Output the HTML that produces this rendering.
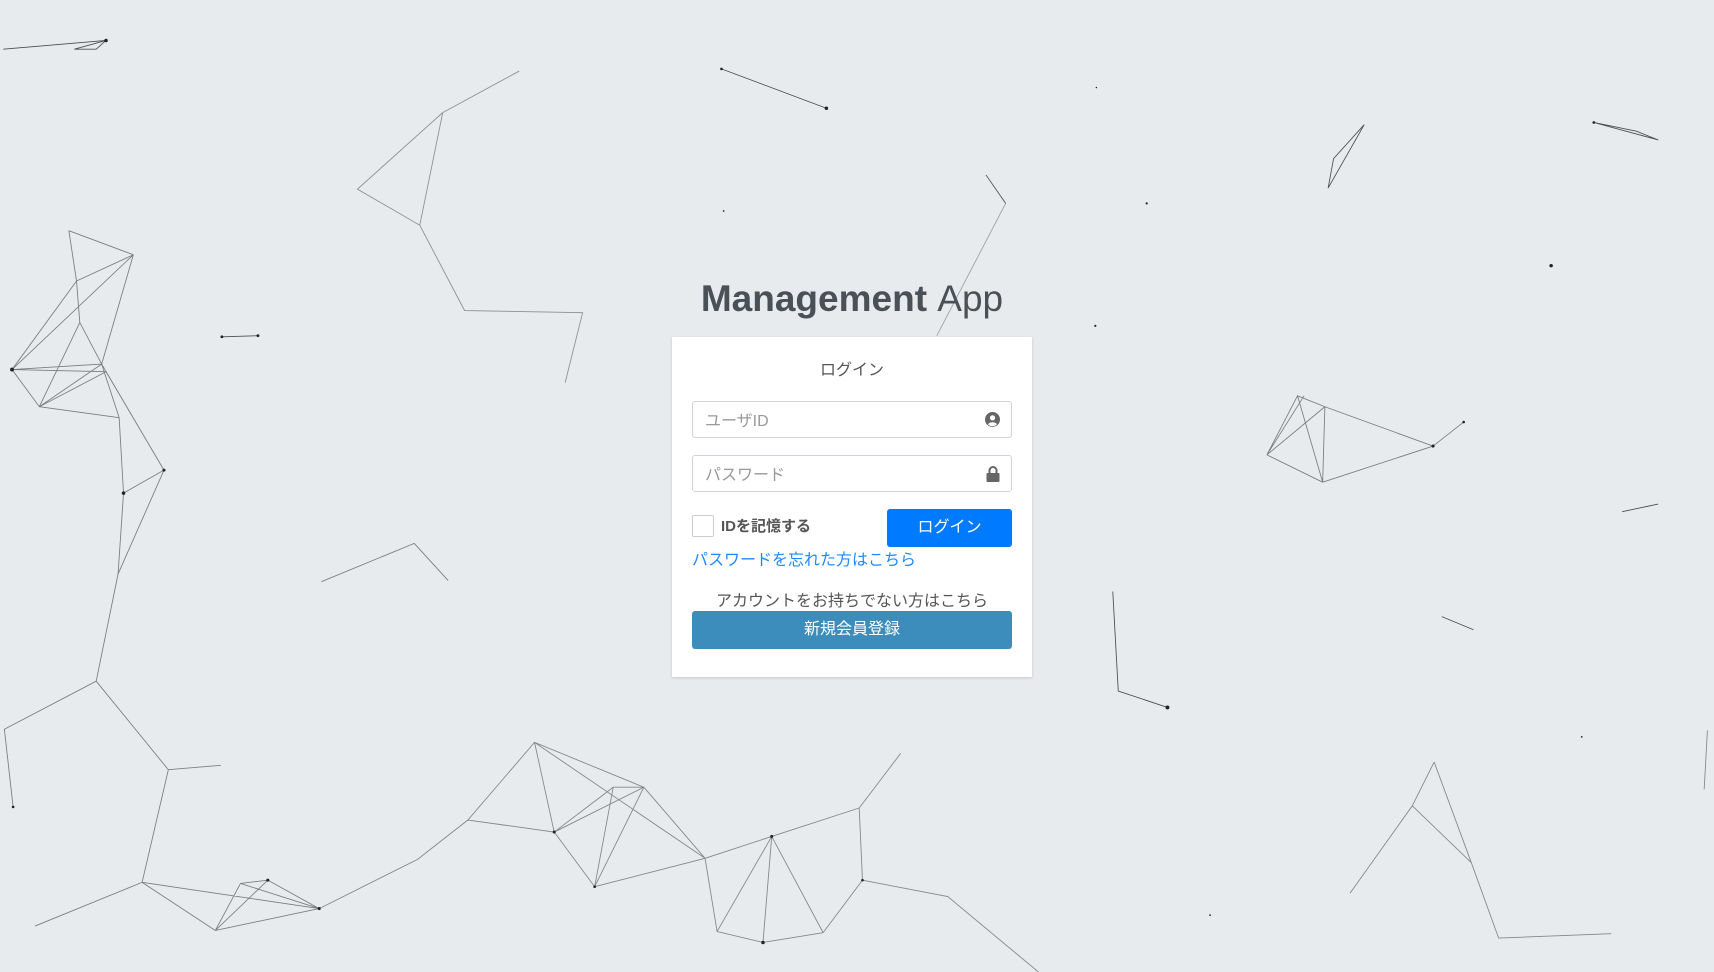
<!DOCTYPE html>
<html><head><meta charset="utf-8">
<style>
html,body{margin:0;padding:0;}
body{width:1714px;height:972px;background:#e8ebee;position:relative;overflow:hidden;font-family:"Liberation Sans","Noto Sans CJK JP",sans-serif;}
svg.bg{position:absolute;left:0;top:0;width:1714px;height:972px;}
.title{position:absolute;left:672px;width:360px;top:274px;text-align:center;font-size:37px;color:#4a5057;line-height:50px;white-space:nowrap;}
.title b{font-weight:700;}
.title span{font-weight:300;}
.card{position:absolute;left:672px;top:337px;width:360px;height:340px;background:#fff;box-shadow:0 1px 3px rgba(0,0,0,.15);}
.h{position:absolute;top:19px;width:100%;text-align:center;font-size:16px;color:#555;}
.inp{position:absolute;left:20px;width:318px;height:35px;border:1px solid #ced4da;border-radius:3px;}
.inp .ph{position:absolute;left:12px;top:5px;font-size:16px;color:#999;}
.inp svg{position:absolute;right:11px;top:10px;}
.cb{position:absolute;left:20px;top:178px;width:20px;height:20px;border:1px solid #ccc;border-radius:2px;}
.cbl{position:absolute;left:49px;top:178px;font-size:15px;font-weight:bold;color:#555;}
.btn{position:absolute;left:215px;top:172px;width:125px;height:38px;background:#007bff;border-radius:3px;color:#fff;font-size:16px;text-align:center;line-height:38px;}
.fg{position:absolute;left:20px;top:209px;font-size:16px;color:#1a8cff;}
.na{position:absolute;top:250px;width:100%;text-align:center;font-size:16px;color:#555;}
.reg{position:absolute;left:20px;top:274px;width:320px;height:38px;background:#3c8dbc;border-radius:3px;color:#fff;font-size:16px;text-align:center;line-height:38px;}
</style></head><body>
<svg class="bg" viewBox="0 0 1568 889" preserveAspectRatio="none">
<g stroke="#333" stroke-width="0.8" fill="none" stroke-opacity="0.85">
<path d="M3 45L97 37M68 45L97 37L88 45Z"/>
<path d="M405 103L475 65M405 103L327 173L384 206L405 103M384 206L425 284L533 286L517 350" stroke-opacity="0.5"/>
<path d="M660 63L756 99"/>
<path d="M902 160L920 186"/><path d="M920 186L857 307" stroke-opacity="0.4"/>
<path d="M1248 114L1220 145L1215 172L1248 114"/>
<path d="M1458 112L1497 120L1517 128L1458 112"/>
<path d="M63 211L122 233M63 211L70 257L122 233M70 257L73 295L93 333M122 233L11 338M70 257L11 338M11 338L36 372L97 340M11 338L97 340M11 338L93 333M36 372L109 382M36 372L93 333M73 295L36 372M122 233L93 333M93 333L109 382M97 340L150 430M93 333L150 430M150 430L113 451L109 382M150 430L108 525M113 451L108 525L88 623L4 667L12 738M88 623L154 704L202 700M154 704L130 807L32 847M130 807L197 851M130 807L292 831M197 851L245 805L292 831L197 851M220 808L197 851M220 808L292 831M245 805L220 808" stroke-opacity="0.6"/>
<path d="M203 308L236 307"/>
<path d="M294 532L379 497L410 531" stroke-opacity="0.6"/>
<path d="M292 831L382 786L428 750L489 679M428 750L507 761L489 679L589 720M489 679L645 785M507 761L561 720L589 720L507 761M507 761L544 811L561 720M544 811L589 720L645 785M544 811L645 785L706 765M645 785L656 852L698 862L753 853M706 765L656 852M706 765L698 862M706 765L753 853M706 765L786 739M753 853L789 805L786 739L824 689M789 805L867 820L950 889" stroke-opacity="0.55"/>
<path d="M1212 372L1311 408L1210 441M1311 408L1339 386M1159 416L1210 441M1159 416L1187 362L1210 441M1212 372L1210 441M1159 416L1212 372M1187 362L1212 372M1193 362L1159 416" stroke-opacity="0.6"/>
<path d="M1484 468L1517 461M1018 541L1023 632L1068 647M1319 564L1348 576"/>
<path d="M1312 697L1292 737L1346 789L1312 697M1292 737L1235 817M1346 789L1371 858L1474 854M1562 668L1559 722" stroke-opacity="0.55"/>
</g>
<g fill="#222">
<circle cx="97" cy="37" r="1.6"/><circle cx="756" cy="99" r="1.6"/><circle cx="660" cy="63" r="1.2"/>
<circle cx="1003" cy="80" r="0.7"/><circle cx="1049" cy="186" r="1"/><circle cx="662" cy="193" r="0.8"/>
<circle cx="1419" cy="243" r="1.6"/><circle cx="1002" cy="298" r="1"/><circle cx="1447" cy="674" r="0.8"/>
<circle cx="1107" cy="837" r="0.8"/><circle cx="11" cy="338" r="1.8"/><circle cx="113" cy="451" r="1.6"/>
<circle cx="150" cy="430" r="1.4"/><circle cx="203" cy="308" r="1.3"/><circle cx="236" cy="307" r="1.3"/>
<circle cx="292" cy="831" r="1.4"/><circle cx="245" cy="805" r="1.4"/><circle cx="507" cy="761" r="1.4"/>
<circle cx="706" cy="765" r="1.4"/><circle cx="698" cy="862" r="1.6"/><circle cx="1068" cy="647" r="1.8"/>
<circle cx="1311" cy="408" r="1.4"/><circle cx="1339" cy="386" r="1.2"/><circle cx="12" cy="738" r="1.2"/>
<circle cx="1458" cy="112" r="1.2"/><circle cx="544" cy="811" r="1.2"/><circle cx="789" cy="805" r="1.2"/>
</g>
</svg>
<div class="title"><b>Management</b> <span>App</span></div>
<div class="card">
<div class="h">ログイン</div>
<div class="inp" style="top:64px"><div class="ph">ユーザID</div>
<svg width="15" height="15" viewBox="0 0 16 16"><circle cx="8" cy="8" r="8" fill="#666"/><circle cx="8" cy="6.2" r="2.8" fill="#fff"/><path d="M3.2 13a5.5 4 0 0 1 9.6 0A6.5 6.5 0 0 1 3.2 13Z" fill="#fff"/></svg></div>
<div class="inp" style="top:118px"><div class="ph">パスワード</div>
<svg width="14" height="16" viewBox="0 0 14 16"><path d="M3.5 7V4.5a3.5 3.5 0 0 1 7 0V7" stroke="#666" stroke-width="2" fill="none"/><rect x="0.5" y="7" width="13" height="9" rx="1" fill="#666"/></svg></div>
<div class="cb"></div><div class="cbl">IDを記憶する</div>
<div class="btn">ログイン</div>
<div class="fg">パスワードを忘れた方はこちら</div>
<div class="na">アカウントをお持ちでない方はこちら</div>
<div class="reg">新規会員登録</div>
</div>
</body></html>
